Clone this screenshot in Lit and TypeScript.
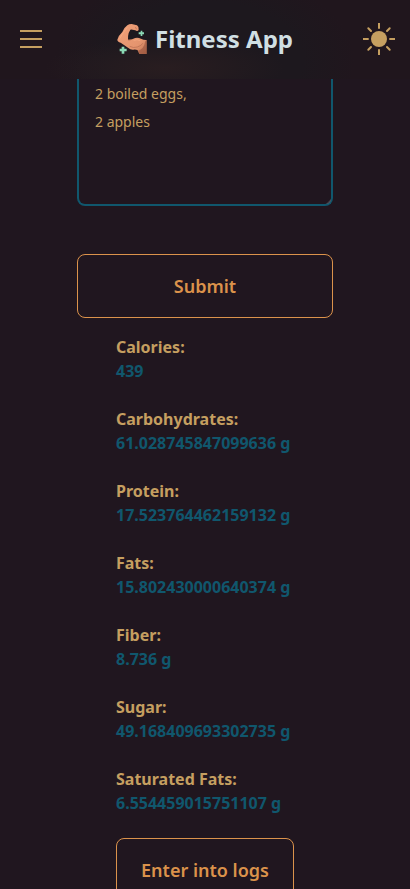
import { LitElement, html, css } from "lit";
import { customElement } from "lit/decorators.js";

const nutrients: [string, string][] = [
  ["Calories:", "439"],
  ["Carbohydrates:", "61.028745847099636 g"],
  ["Protein:", "17.523764462159132 g"],
  ["Fats:", "15.802430000640374 g"],
  ["Fiber:", "8.736 g"],
  ["Sugar:", "49.168409693302735 g"],
  ["Saturated Fats:", "6.554459015751107 g"],
];

@customElement("app-root")
export class AppRoot extends LitElement {
  static styles = css`
    * { box-sizing: border-box; }
    :host {
      display: flex;
      flex-direction: column;
      height: 100vh;
      overflow: hidden;
      background: #20161f;
      color: #c59f60;
      font: 16px/24px "Noto Sans", sans-serif;
    }
    .bar {
      flex: none;
      height: 79px;
      display: flex;
      align-items: center;
      justify-content: space-between;
      padding: 0 15px 1px 19px;
      background:
        radial-gradient(ellipse 120px 30px at 165px 68px, #291d20 0%, #291d2000 100%),
        radial-gradient(ellipse 150px 90px at 205px 60px, #1d181e 0%, #1d181e 65%, #1d181e00 100%),
        #20161d;
    }
    .bar svg, .brand svg { display: block; }
    .brand {
      display: flex;
      align-items: center;
      gap: 8px;
      margin-left: 4px;
      color: #d0dfe3;
      font-size: 24px;
      line-height: 32px;
      font-weight: 700;
      white-space: nowrap;
    }
    .body {
      flex: 1;
      min-height: 0;
      display: flex;
      flex-direction: column;
      align-items: center;
    }
    .meal {
      flex: none;
      position: relative;
      width: 256px;
      height: 127px;
      border: 2px solid #10576d;
      border-top: 0;
      border-radius: 0 0 8px 8px;
      padding: 1px 16px;
      font-size: 14px;
      line-height: 28px;
    }
    .meal div { white-space: nowrap; }
    .grip { position: absolute; right: 0; bottom: 0; }
    .btn {
      flex: none;
      height: 64px;
      border: 1px solid #db924b;
      border-radius: 8px;
      background: none;
      color: #db924b;
      font: 600 18px/18px "Noto Sans", sans-serif;
      padding: 0 24px;
      white-space: nowrap;
    }
    .submit { width: 256px; margin-top: 48px; }
    .results {
      width: 178px;
      display: flex;
      flex-direction: column;
      gap: 24px;
      padding-top: 17px;
      font-weight: 700;
      white-space: nowrap;
    }
    .value { color: #10576d; }
    .log { width: 178px; margin-top: -1px; }
  `;

  render() {
    return html`
      <header class="bar">
        <svg width="24" height="24" viewBox="0 0 24 24">
          <path d="M1 4H23M1 12H23M1 20H23" stroke="#c59f60" stroke-width="2" />
        </svg>
        <div class="brand">
          <svg width="30" height="30" viewBox="0 0 90 90">
            <defs>
              <linearGradient id="skin" x1="0" y1="0" x2="1" y2="1">
                <stop offset="0" stop-color="#f0a17a" />
                <stop offset=".7" stop-color="#e4946e" />
                <stop offset="1" stop-color="#b87050" />
              </linearGradient>
            </defs>
            <path fill="url(#skin)" d="M31 4Q36 0 44 0L60 4Q66 8 65 18Q61 24 55 19L47 17Q42 16 40 17L35 27Q32 38 33 47Q43 48 49 44Q60 39 72 44Q81 49 89 48V90H67L62 79Q57 76 49 77Q41 78 33 71Q23 64 11 56Q1 53 1 47Q5 34 16 24Q22 10 31 4Z" />
            <path fill="none" stroke="#b56b4f" stroke-width="2" d="M55 9L59 16M33 48Q39 49 45 46M38 67Q49 73 61 69Q74 65 77 58" />
            <path fill="#8f4c38" opacity=".55" d="M85 51L89 48V90H67L63 80Q81 76 85 51Z" />
            <path fill="none" stroke="#ffb58c" stroke-width="3" opacity=".5" d="M31 10Q18 25 8 44M50 49Q61 45 70 50" />
            <path fill="#8bd9b5" d="M71 20H76V25H81V31H76V36H71V31H65V25H71ZM14 68H22V74H29V82H22V89H14V82H8V74H14Z" />
          </svg>
          <span>Fitness App</span>
        </div>
        <svg width="32" height="32" viewBox="0 0 32 32">
          <circle cx="16" cy="16" r="8" fill="#c59f60" />
          <path d="M16 0V5.7M16 26.3V32M0 16H5.7M26.3 16H32" stroke="#c59f60" stroke-width="2" />
          <path d="M5.3 5.3L8 8M24 24L26.7 26.7M5.3 26.7L8 24M24 8L26.7 5.3" stroke="#c59f60" stroke-width="2" stroke-linecap="round" />
        </svg>
      </header>
      <main class="body">
        <div class="meal">
          <div>2 boiled eggs,</div>
          <div>2 apples</div>
          <svg class="grip" width="6" height="6" viewBox="0 0 6 6">
            <path d="M1 6L6 1V3Q5 5 3 6Z" fill="#625a60" opacity=".6" />
          </svg>
        </div>
        <button class="btn submit">Submit</button>
        <div class="results">
          ${nutrients.map(([label, value]) => html`
            <div>
              <div>${label}</div>
              <div class="value">${value}</div>
            </div>`)}
          <button class="btn log">Enter into logs</button>
        </div>
      </main>
    `;
  }
}
